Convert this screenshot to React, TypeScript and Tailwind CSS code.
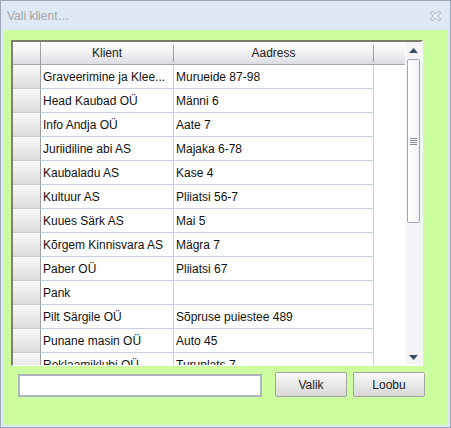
import React from "react";

const rows: [string, string][] = [
  ["Graveerimine ja Klee...", "Murueide 87-98"],
  ["Head Kaubad OÜ", "Männi 6"],
  ["Info Andja OÜ", "Aate 7"],
  ["Juriidiline abi AS", "Majaka 6-78"],
  ["Kaubaladu AS", "Kase 4"],
  ["Kultuur AS", "Pliiatsi 56-7"],
  ["Kuues Särk AS", "Mai 5"],
  ["Kõrgem Kinnisvara AS", "Mägra 7"],
  ["Paber OÜ", "Pliiatsi 67"],
  ["Pank", ""],
  ["Pilt Särgile OÜ", "Sõpruse puiestee 489"],
  ["Punane masin OÜ", "Auto 45"],
  ["Reklaamiklubi OÜ", "Turuplats 7"],
];

function CloseIcon() {
  return (
    <svg width="13" height="10" viewBox="0 0 13 10">
      <path
        d="M1 1.5 L3.5 0.5 L6.5 3 L9.5 0.5 L12 1.5 L8.5 5 L12 8.5 L9.5 9.5 L6.5 7 L3.5 9.5 L1 8.5 L4.5 5 Z"
        fill="#eef3f9"
        stroke="#9fb0c6"
        strokeWidth="1"
        strokeLinejoin="round"
      />
    </svg>
  );
}

function HeaderCell({ label, w, sep }: { label: string; w: string; sep: boolean }) {
  return (
    <div className={`${w} h-full flex items-center`}>
      <div className="flex-1 text-center text-[12px] text-[#1a1a1a]">{label}</div>
      {sep && <div className="w-px h-[17px] bg-[#9c9c9c]" />}
    </div>
  );
}

function Scrollbar() {
  return (
    <div className="w-[16px] h-full flex flex-col bg-[#f4f4f6] border-l border-[#fbfbfb]">
      <div className="h-[16px] flex items-center justify-center">
        <svg width="9" height="5" viewBox="0 0 9 5">
          <path d="M0 5 L4.5 0 L9 5 Z" fill="#3f4d6c" />
        </svg>
      </div>
      <div className="flex-1 flex flex-col px-px">
        <div className="mt-px h-[164px] rounded-[2px] border border-[#a2a8b2] bg-gradient-to-r from-white to-[#f3f3f5] flex flex-col items-center justify-center gap-[1px]">
          <div className="w-[7px] h-px bg-[#8a8e96]" />
          <div className="w-[7px] h-px bg-[#8a8e96]" />
          <div className="w-[7px] h-px bg-[#8a8e96]" />
          <div className="w-[7px] h-px bg-[#8a8e96]" />
        </div>
      </div>
      <div className="h-[16px] flex items-center justify-center">
        <svg width="9" height="5" viewBox="0 0 9 5">
          <path d="M0 0 L9 0 L4.5 5 Z" fill="#3f4d6c" />
        </svg>
      </div>
    </div>
  );
}

export default function App() {
  return (
    <div
      className="w-[451px] h-[428px] border border-[#9ba7b7] bg-[#dfe9f5] flex flex-col"
      style={{ fontFamily: '"Liberation Sans", Arial, sans-serif' }}
    >
      <div className="h-[29px] flex items-center justify-between pl-[6px] pr-[8px]">
        <span className="text-[12px] text-[#a3a3a3]">Vali klient…</span>
        <CloseIcon />
      </div>

      <div className="ml-[2px] mr-[3px] h-[395px] bg-[#ccfd9e] flex flex-col pt-[10px]">
        <div className="ml-[8px] w-[412px] h-[326px] border-t-2 border-l-2 border-r-2 border-b border-t-[#7f7c70] border-l-[#7f7f7f] border-r-[#f6f6f6] border-b-white flex bg-white">
          <div className="w-[392px] h-full flex flex-col">
            <div className="h-[23px] flex border-b border-[#a3a7ae] bg-gradient-to-b from-white via-[#f1f1f3] to-[#dcdde1]">
              <div className="w-[28px] h-full border-r border-[#a0a0a0]" />
              <HeaderCell label="Klient" w="w-[133px]" sep />
              <HeaderCell label="Aadress" w="w-[200px]" sep />
              <div className="w-[31px] h-full" />
            </div>
            <div className="flex-1 overflow-hidden">
              {rows.map(([name, addr], i) => (
                <div key={i} className="h-[24px] flex text-[12px] text-[#111]">
                  <div className="w-[28px] h-full border-r border-[#a0a0a0] border-b border-b-[#c9c9c9] bg-gradient-to-b from-[#f8f8f8] to-[#dcdcdc]" />
                  <div className="w-[133px] h-full border-r border-b border-[#c3d1e3] flex items-center pl-[2px] whitespace-nowrap overflow-hidden">
                    {name}
                  </div>
                  <div className="w-[200px] h-full border-r border-b border-[#c3d1e3] flex items-center pl-[2px] whitespace-nowrap overflow-hidden">
                    {addr}
                  </div>
                  <div className="w-[31px] h-full" />
                </div>
              ))}
            </div>
          </div>
          <Scrollbar />
        </div>

        <div className="mt-[6px] ml-[15px] flex items-end">
          <div className="w-[244px] h-[23px] border-2 border-[#aeb5be] bg-white" />
          <button className="ml-[13px] w-[72px] h-[25px] rounded-[2px] border border-[#a3a3a3] bg-gradient-to-b from-[#f9f9f9] to-[#d7d7d7] text-[12px] text-[#1a1a1a]">
            Valik
          </button>
          <button className="ml-[6px] w-[72px] h-[25px] rounded-[2px] border border-[#a3a3a3] bg-gradient-to-b from-[#f9f9f9] to-[#d7d7d7] text-[12px] text-[#1a1a1a]">
            Loobu
          </button>
        </div>
      </div>
    </div>
  );
}
